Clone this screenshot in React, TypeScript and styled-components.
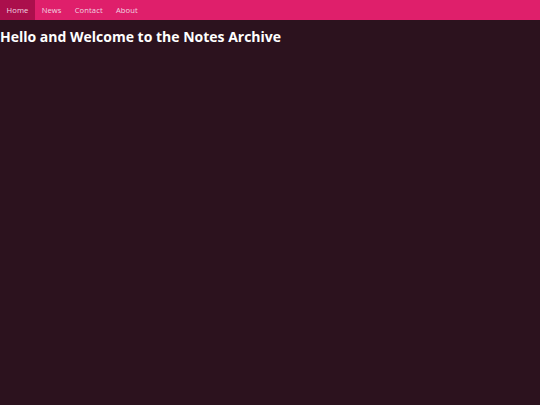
import React from 'react';
import styled, { createGlobalStyle } from 'styled-components';

const GlobalStyle = createGlobalStyle`
  html, body {
    margin: 0;
    padding: 0;
    height: 100%;
    background: #2c121e;
  }
  body {
    font-family: 'Open Sans', 'Noto Sans', sans-serif;
    color: #fff;
  }
`;

const NavBar = styled.nav`
  display: flex;
  height: 20px;
  background: #df1f6b;
`;

const NavLink = styled.a<{ active?: boolean }>`
  display: flex;
  align-items: center;
  padding: 0 6.6px;
  font-size: 7.6px;
  letter-spacing: 0.1px;
  color: #f0d6e0;
  text-decoration: none;
  background: ${props => (props.active ? '#ab0f4c' : 'transparent')};
`;

const Title = styled.h1`
  margin: 8px 0 0;
  font-size: 14px;
  line-height: 18px;
  font-weight: 700;
  color: #fff;
`;

const links = ['Home', 'News', 'Contact', 'About'];

export default function App(): JSX.Element {
  return (
    <>
      <GlobalStyle />
      <NavBar>
        {links.map((l, i) => (
          <NavLink key={l} href="#" active={i === 0}>{l}</NavLink>
        ))}
      </NavBar>
      <Title>Hello and Welcome to the Notes Archive</Title>
    </>
  );
}
